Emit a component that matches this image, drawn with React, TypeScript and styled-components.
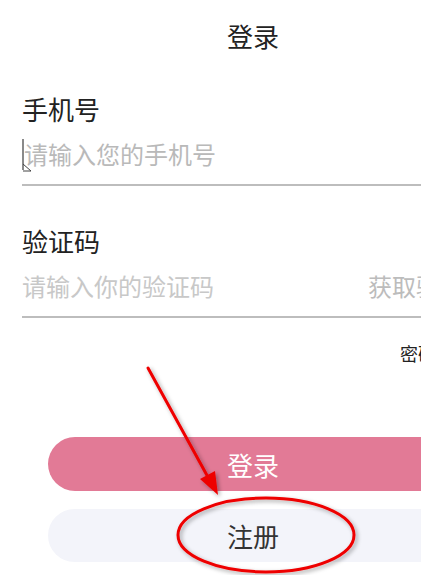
import React from "react";
import styled, { createGlobalStyle } from "styled-components";

const Global = createGlobalStyle`
  html, body { margin: 0; padding: 0; background: #ffffff; overflow: hidden; }
  body { font-family: "Noto Sans CJK SC", "Noto Sans", sans-serif; }
  * { box-sizing: border-box; }
`;

const Page = styled.div`
  position: relative;
  width: 506px;
  height: 575px;
  background: #ffffff;
  display: flex;
  flex-direction: column;
`;

const Header = styled.header`
  height: 70px;
  display: flex;
  align-items: center;
  justify-content: center;
  font-size: 26px;
  color: #222;
`;

const Form = styled.form`
  display: flex;
  flex-direction: column;
  padding: 0 22px;
`;

const Field = styled.div<{ $top: number }>`
  display: flex;
  flex-direction: column;
  margin-top: ${(p) => p.$top}px;
`;

const Label = styled.label`
  font-size: 26px;
  line-height: 36px;
  height: 36px;
  color: #222;
  margin-bottom: 6px;
`;

const InputRow = styled.div`
  position: relative;
  display: flex;
  align-items: center;
  justify-content: space-between;
  height: 53px;
  padding-bottom: 9px;
  border-bottom: 2px solid #bdbdbd;
`;

const Placeholder = styled.span<{ $shade: string; $indent: number }>`
  font-size: 24px;
  line-height: 44px;
  color: ${(p) => p.$shade};
  padding-left: ${(p) => p.$indent}px;
  white-space: nowrap;
`;

const GetCode = styled.span`
  font-size: 24px;
  line-height: 44px;
  color: #bcbcbc;
  white-space: nowrap;
  margin-right: -4px;
`;

const Caret = styled.svg`
  position: absolute;
  left: 0;
  top: 5px;
`;

const SwitchRow = styled.div`
  display: flex;
  justify-content: flex-end;
  margin-top: 23px;
  padding-right: 12px;
  font-size: 18px;
  line-height: 24px;
  color: #222;
`;

const Buttons = styled.div`
  display: flex;
  flex-direction: column;
  gap: 18px;
  padding: 0 48px;
  margin-top: 72px;
`;

const PillButton = styled.button<{ $bg: string; $fg: string; $h: number }>`
  height: ${(p) => p.$h}px;
  border: none;
  border-radius: 27px;
  background: ${(p) => p.$bg};
  color: ${(p) => p.$fg};
  font-family: "Noto Sans CJK SC", "Noto Sans", sans-serif;
  font-size: 26px;
  display: flex;
  align-items: center;
  justify-content: center;
  padding: 0;
`;

const Annotation = styled.svg`
  position: absolute;
  left: 0;
  top: 0;
  pointer-events: none;
`;

export default function App() {
  return (
    <>
      <Global />
      <Page>
        <Header>登录</Header>
        <Form>
          <Field $top={21}>
            <Label>手机号</Label>
            <InputRow>
              <Caret width="12" height="36" viewBox="0 0 12 36">
                <line x1="1" y1="1" x2="1" y2="32" stroke="#8a8a8a" strokeWidth="2" />
                <polyline points="1,26 9,33 1,33" fill="none" stroke="#444" strokeWidth="1" />
              </Caret>
              <Placeholder $shade="#b9b9b9" $indent={2}>请输入您的手机号</Placeholder>
            </InputRow>
          </Field>
          <Field $top={37}>
            <Label>验证码</Label>
            <InputRow>
              <Placeholder $shade="#c8c8c8" $indent={0}>请输入你的验证码</Placeholder>
              <GetCode>获取验证码</GetCode>
            </InputRow>
          </Field>
          <SwitchRow>密码登录</SwitchRow>
        </Form>
        <Buttons>
          <PillButton type="button" $bg="#e27a96" $fg="#ffffff" $h={54}>登录</PillButton>
          <PillButton type="button" $bg="#f3f4fa" $fg="#333333" $h={53}>注册</PillButton>
        </Buttons>
        <Annotation width="506" height="575" viewBox="0 0 506 575">
          <defs>
            <filter id="shadow" x="-20%" y="-20%" width="140%" height="140%">
              <feDropShadow dx="2" dy="2" stdDeviation="2" floodColor="#000" floodOpacity="0.35" />
            </filter>
          </defs>
          <g filter="url(#shadow)">
            <line x1="148" y1="368" x2="209" y2="479" stroke="#ee0000" strokeWidth="3" strokeLinecap="round" />
            <polygon points="218,495 200,479 215,471" fill="#ee0000" />
            <ellipse cx="266" cy="535" rx="88" ry="37" fill="none" stroke="#ee0000" strokeWidth="3" />
          </g>
        </Annotation>
      </Page>
    </>
  );
}
